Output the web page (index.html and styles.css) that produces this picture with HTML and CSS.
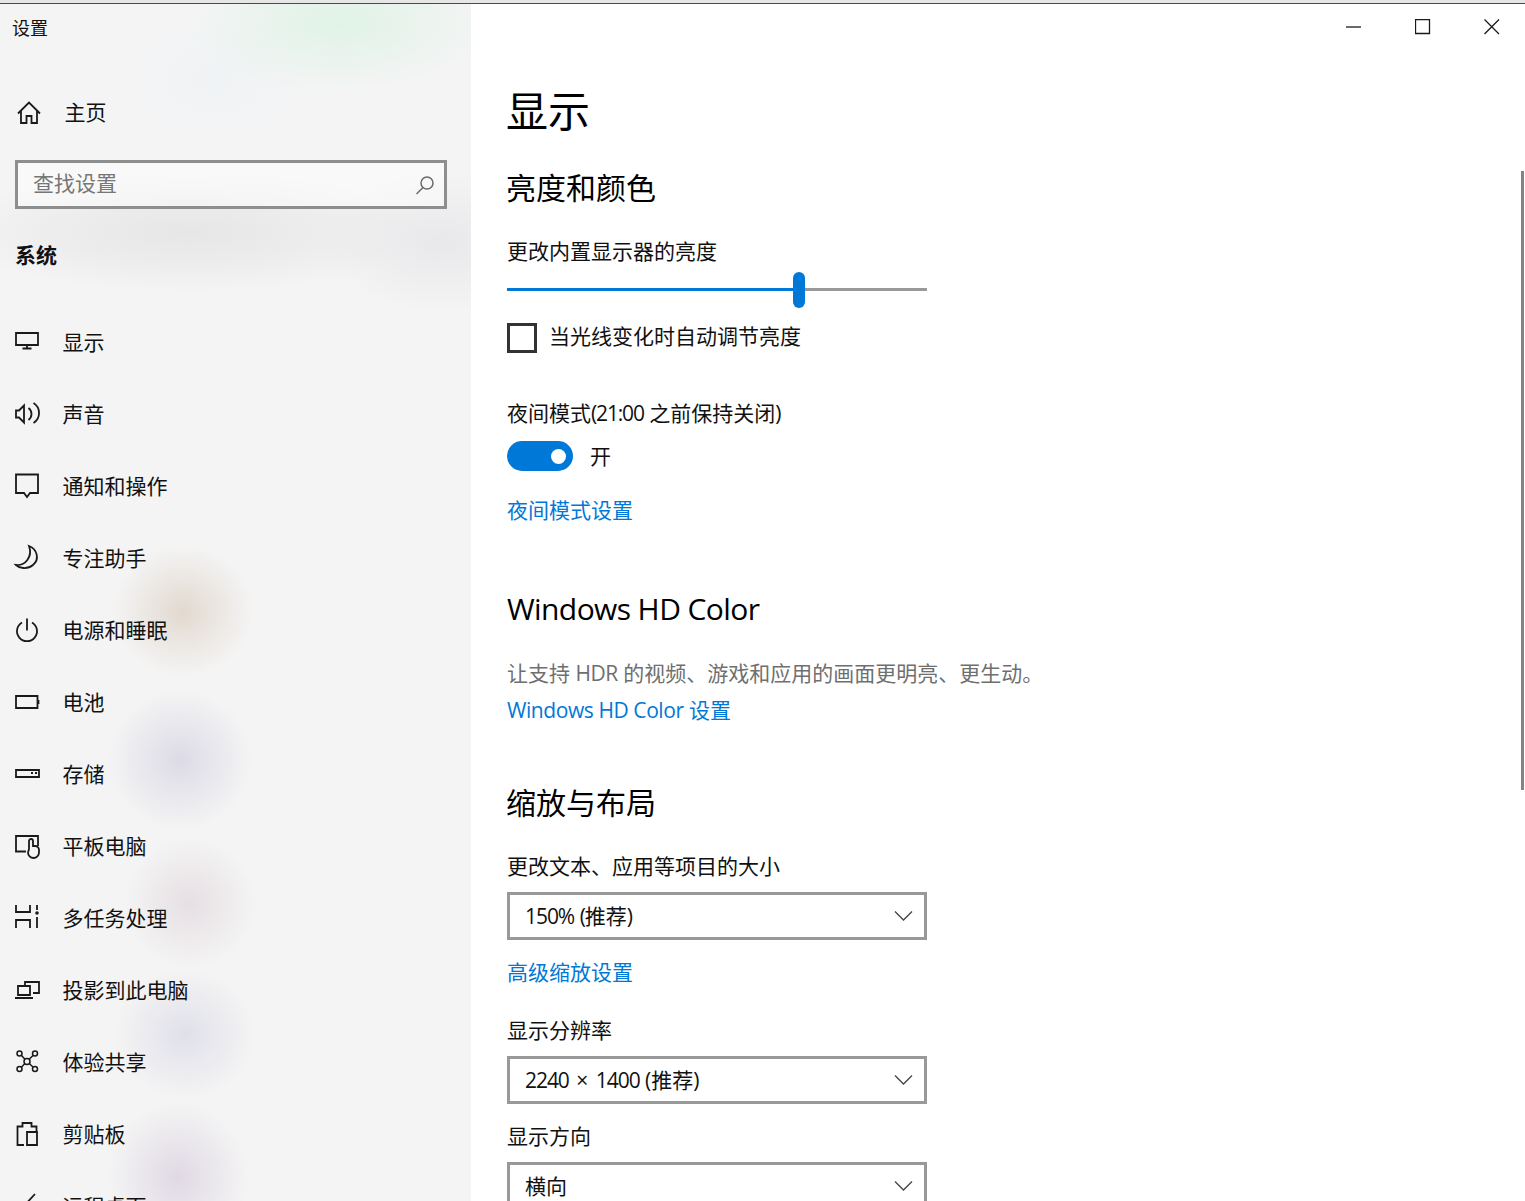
FILE: index.html
```html
<!DOCTYPE html>
<html lang="zh-CN">
<head>
<meta charset="utf-8">
<title>设置</title>
<link rel="stylesheet" href="styles.css">
</head>
<body>
<div class="window">
  <div class="topstrip"></div>
  <div class="panes">
    <aside class="sidebar">
      <div class="apptitle">设置</div>
      <div class="home">
        <svg class="icon" viewBox="0 0 26 26"><path d="M4 13.500L15 2.500l11 11M7 10.500V23h5.500v-7h5v7H23V10.500"/></svg>
        <span>主页</span>
      </div>
      <div class="search">
        <span>查找设置</span>
        <svg class="search-icon" viewBox="0 0 20 20"><circle cx="12" cy="8" r="6"/><path d="M8 12.500L1.500 19"/></svg>
      </div>
      <div class="group">系统</div>
      <nav class="nav">
        <div class="nav-row"><svg class="icon" viewBox="0 0 26 26"><path d="M2 4h22v12H2zM13 16v3M8.500 19.500h9"/></svg><span>显示</span></div>
        <div class="nav-row"><svg class="icon" viewBox="0 0 26 26"><path d="M2 9.500h3l5-5v17l-5-5H2zM14.500 7a7.500 7.500 0 0 1 0 12M19.500 2a11.800 11.800 0 0 1 0 20"/></svg><span>声音</span></div>
        <div class="nav-row"><svg class="icon" viewBox="0 0 26 26"><path d="M2 1.500h22v18.500h-8l-3 4-3-4H2z"/></svg><span>通知和操作</span></div>
        <div class="nav-row"><svg class="icon" viewBox="0 0 26 26"><path d="M15 1C23 4 26 14 19 20C13 25 5 23 2 20C11 21 19 12 15 1z"/></svg><span>专注助手</span></div>
        <div class="nav-row"><svg class="icon" viewBox="0 0 26 26"><path d="M8 5.500a10 10 0 1 0 10 0M13 1.500v12"/></svg><span>电源和睡眠</span></div>
        <div class="nav-row"><svg class="icon" viewBox="0 0 26 26"><path d="M2 7h21.500v12H2zM24.500 11v4"/></svg><span>电池</span></div>
        <div class="nav-row"><svg class="icon" viewBox="0 0 26 26"><path d="M2 9h23v7H2zM17 12h2M21 12h2"/></svg><span>存储</span></div>
        <div class="nav-row"><svg class="icon" viewBox="0 0 26 26"><path d="M12 18.500H2V3h22v10M15 16V8a2 2 0 0 1 4 0v5h2a4 4 0 0 1 4 4v2.500a5.500 5.500 0 0 1-11 0z"/></svg><span>平板电脑</span></div>
        <div class="nav-row"><svg class="icon" viewBox="0 0 26 26"><path d="M2 0v7h14V0M2 23v-8h14v8M23 0v5M23 12v11"/><circle class="solid" cx="23" cy="8" r="1.800"/></svg><span>多任务处理</span></div>
        <div class="nav-row"><svg class="icon" viewBox="0 0 26 26"><path d="M11 8V5h14v11h-6M4 9h12v9H4zM1 21h18"/></svg><span>投影到此电脑</span></div>
        <div class="nav-row"><svg class="icon thin" viewBox="0 0 26 26"><circle cx="5.500" cy="4.500" r="2.500"/><circle cx="21" cy="4.500" r="2.500"/><circle cx="5.500" cy="20" r="2.500"/><circle cx="21" cy="20" r="2.500"/><circle cx="13" cy="12.500" r="3"/><path d="M7.500 6.500l3.500 3.800M19 6.500l-3.800 3.800M7.500 18l3.500-3.500M19 18l-3.800-3.500"/></svg><span>体验共享</span></div>
        <div class="nav-row"><svg class="icon" viewBox="0 0 26 26"><path d="M10 24H3.500V5.500h5V2h9v3.500h5V10M13 11h10v13H13z"/></svg><span>剪贴板</span></div>
        <div class="nav-row"><svg class="icon" viewBox="0 0 26 26"><path d="M4 9l5 5L21 1"/></svg><span>远程桌面</span></div>
      </nav>
    </aside>
    <main class="content">
      <div class="controls">
        <svg class="ctl" viewBox="0 0 16 16"><path d="M0 8h15"/></svg>
        <svg class="ctl" viewBox="0 0 16 16"><path d="M.5 .5h14v14H.5z"/></svg>
        <svg class="ctl" viewBox="0 0 16 16"><path d="M.5 .5l14.500 14.500M15 .5L.5 15"/></svg>
      </div>
      <h1 class="title">显示</h1>
      <h2 class="heading first">亮度和颜色</h2>
      <div class="label after-heading">更改内置显示器的亮度</div>
      <div class="slider"><div class="slider-fill"></div><div class="slider-thumb"></div><div class="slider-rest"></div></div>
      <div class="check"><span class="box"></span><span class="check-text">当光线变化时自动调节亮度</span></div>
      <div class="label night">夜间模式<span class="num-tight">(21:00</span> 之前保持关闭)</div>
      <div class="toggle-row"><span class="toggle"><span class="knob"></span></span><span class="toggle-text">开</span></div>
      <a class="link night-link">夜间模式设置</a>
      <h2 class="heading hd"><span class="lat">Windows HD Color</span></h2>
      <div class="label muted after-heading mixed">让支持 <span class="lat">HDR</span> 的视频、游戏和应用的画面更明亮、更生动。</div>
      <a class="link hd-link"><span class="lat">Windows HD Color</span> 设置</a>
      <h2 class="heading scale">缩放与布局</h2>
      <div class="label after-heading">更改文本、应用等项目的大小</div>
      <div class="select"><span class="sel-text"><span class="num">150%</span> <span class="num">(</span>推荐)</span><svg class="chev" viewBox="0 0 20 12"><path d="M1 1.500l8.500 8.500L18 1.500"/></svg></div>
      <a class="link adv-link">高级缩放设置</a>
      <div class="label res">显示分辨率</div>
      <div class="select"><span class="sel-text"><span class="num">2240</span> <span class="times">×</span> <span class="num">1400</span> (推荐)</span><svg class="chev" viewBox="0 0 20 12"><path d="M1 1.500l8.500 8.500L18 1.500"/></svg></div>
      <div class="label orient">显示方向</div>
      <div class="select"><span class="sel-text">横向</span><svg class="chev" viewBox="0 0 20 12"><path d="M1 1.500l8.500 8.500L18 1.500"/></svg></div>
      <div class="scrollbar"></div>
    </main>
  </div>
</div>
</body>
</html>
```
FILE: styles.css
```css
* { box-sizing: border-box; }
html, body { margin: 0; height: 100%; overflow: hidden; background: #fff; }
body { font-family: "Open Sans", "Noto Sans CJK SC", sans-serif; font-size: 21px; color: #111; }
.window { height: 1201px; display: flex; flex-direction: column; overflow: hidden; }
.topstrip { height: 4px; flex: none; background: #e6e6e6; border-bottom: 1px solid #4a4a4a; }
.panes { flex: 1; display: flex; min-height: 0; }

.sidebar {
  width: 471px; flex: none; overflow: hidden;
  background:
    radial-gradient(ellipse 150px 70px at 340px 18px, #e0f3e7, rgba(224,243,231,.55) 45%, rgba(224,243,231,0)),
    radial-gradient(ellipse 100px 70px at 215px 75px, rgba(236,241,245,.6), rgba(236,241,245,0)),
    radial-gradient(ellipse 240px 60px at 190px 228px, rgba(228,228,229,.85), rgba(228,228,229,.5) 50%, rgba(228,228,229,0)),
    radial-gradient(ellipse 120px 70px at 440px 238px, rgba(227,227,231,.7), rgba(227,227,231,0)),
    radial-gradient(ellipse 70px 65px at 183px 607px, #e2d9cf, rgba(226,217,207,.5) 50%, rgba(226,217,207,0)),
    radial-gradient(ellipse 72px 70px at 180px 756px, #dcdbe6, rgba(220,219,230,.5) 50%, rgba(220,219,230,0)),
    radial-gradient(ellipse 65px 65px at 190px 899px, #e6dfe3, rgba(230,223,227,.5) 50%, rgba(230,223,227,0)),
    radial-gradient(ellipse 70px 65px at 185px 1030px, #e0e0ea, rgba(224,224,234,.5) 50%, rgba(224,224,234,0)),
    radial-gradient(ellipse 70px 75px at 178px 1173px, #e0d9e4, rgba(224,217,228,.5) 50%, rgba(224,217,228,0)),
    #f4f4f4;
}
.apptitle { height: 48px; padding-left: 12px; font-size: 18px; line-height: 48px; }
.home { height: 48px; margin-top: 37px; display: flex; align-items: center; gap: 24.5px; padding-left: 14px; }
.home span { margin-top: -4px; }
.icon { width: 26px; height: 26px; flex: none; overflow: visible; fill: none; stroke: #1a1a1a; stroke-width: 1.8; }
.icon.thin { stroke-width: 1.5; }
.icon .solid { fill: #1a1a1a; stroke: none; }
.search {
  width: 432px; height: 49px; margin: 23px 0 0 15px; padding: 0 9px 0 15px;
  display: flex; align-items: center; justify-content: space-between;
  border: 3px solid #8e8e8e; background: rgba(255,255,255,.45); color: #767676;
}
.search span { margin-top: -6px; }
.search-icon { width: 20px; height: 20px; fill: none; stroke: #6a6a6a; stroke-width: 1.5; }
.group { height: 30px; margin: 32px 0 0 15px; line-height: 28px; font-weight: 700; }
.nav { margin-top: 35px; }
.nav-row { height: 72px; display: flex; align-items: center; gap: 22.5px; padding-left: 14px; }
.nav-row span { margin-top: -2px; }

.content { flex: 1; position: relative; padding-left: 36px; overflow: hidden; background: #fff; }
.controls { height: 46px; display: flex; justify-content: flex-end; align-items: center; gap: 53px; padding-right: 25px; }
.ctl { width: 16px; height: 16px; fill: none; stroke: #1a1a1a; stroke-width: 1.3; }
.title { height: 60px; margin: 32px 0 0 -1px; font-size: 42px; line-height: 58px; font-weight: 400; color: #000; }
.heading { height: 44px; margin: 0 0 0 -1px; font-size: 30px; line-height: 42px; font-weight: 400; color: #000; }
.heading.first { margin-top: 25px; }
.heading.hd { margin: 62px 0 0; }
.heading.scale { margin-top: 57px; }
.label { height: 30px; line-height: 28px; }
.after-heading { margin-top: 26px; }
.muted { color: #6f6f6f; }
.mixed { line-height: 30px; }
.night { margin-top: 45px; line-height: 30px; }
.res { margin-top: 28px; }
.orient { margin-top: 18px; }
.lat { letter-spacing: -.02em; }
.num { letter-spacing: -.05em; }
.num-tight { letter-spacing: -.055em; }
.times { margin: 0 2px; }

.slider { width: 420px; height: 36px; margin-top: 5px; display: flex; align-items: center; }
.slider-fill { width: 286px; height: 3px; margin-bottom: 1px; background: #0078d7; }
.slider-thumb { width: 12px; height: 36px; border-radius: 6px; background: #0078d7; }
.slider-rest { flex: 1; height: 3px; margin-bottom: 1px; background: #999; }

.check { margin-top: 15px; height: 30px; display: flex; align-items: center; gap: 12px; }
.box { width: 30px; height: 30px; border: 3px solid #333; }
.check-text { margin: -6px 0 0; }

.toggle-row { margin-top: 13px; height: 30px; display: flex; align-items: center; gap: 17px; }
.toggle { width: 66px; height: 30px; padding-right: 7px; border-radius: 15px; background: #0078d7; display: flex; justify-content: flex-end; align-items: center; }
.knob { width: 15px; height: 15px; border-radius: 50%; background: #fff; }
.toggle-text { margin-top: -2px; }

.link { display: block; height: 30px; line-height: 29px; color: #0078d7; }
.night-link { margin-top: 25px; }
.hd-link { margin-top: 7px; line-height: 30px; }
.adv-link { margin-top: 18px; }

.select {
  width: 420px; height: 48px; margin-top: 10px; padding: 0 10px 0 15px;
  display: flex; align-items: center; justify-content: space-between;
  border: 3px solid #999; background: #fff;
}
.sel-text { margin-top: -2px; }
.chev { width: 20px; height: 12px; fill: none; stroke: #444; stroke-width: 1.3; }
.scrollbar { position: absolute; top: 167px; right: 1px; width: 3px; height: 619px; background: #848484; }
```
